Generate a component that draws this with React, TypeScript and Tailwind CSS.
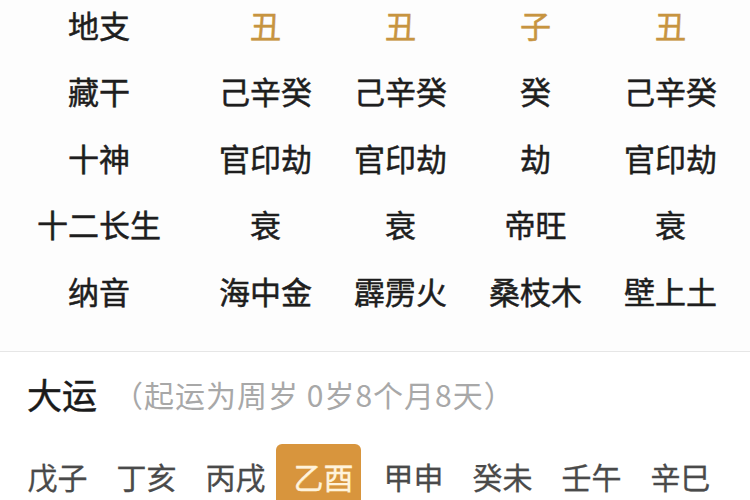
import React from 'react';

const rows: { label: string; cells: string[]; gold?: boolean }[] = [
  { label: '地支', cells: ['丑', '丑', '子', '丑'], gold: true },
  { label: '藏干', cells: ['己辛癸', '己辛癸', '癸', '己辛癸'] },
  { label: '十神', cells: ['官印劫', '官印劫', '劫', '官印劫'] },
  { label: '十二长生', cells: ['衰', '衰', '帝旺', '衰'] },
  { label: '纳音', cells: ['海中金', '霹雳火', '桑枝木', '壁上土'] },
];

const dayun = ['戊子', '丁亥', '丙戌', '乙酉', '甲申', '癸未', '壬午', '辛巳'];

const App: React.FC = () => {
  return (
    <div
      className="w-[750px] h-[500px] overflow-hidden bg-white"
      style={{ fontFamily: '"Noto Sans CJK SC", "Noto Sans", sans-serif' }}
    >
      {/* 四柱表 */}
      <div className="flex flex-col h-[352px] bg-[#fdfdfd] border-b border-[#e6e6e6]">
        <div className="-mt-[9px]">
          {rows.map((row) => (
            <div
              key={row.label}
              className="grid grid-cols-[198px_repeat(4,135px)] h-[66.5px] items-center text-[31px] leading-none [-webkit-text-stroke:0.5px_currentColor]"
            >
              <span className="text-center text-[#1e1e1e]">{row.label}</span>
              {row.cells.map((c, i) => (
                <span
                  key={i}
                  className={`text-center ${row.gold ? 'text-[#c79440]' : 'text-[#1e1e1e]'}`}
                >
                  {c}
                </span>
              ))}
            </div>
          ))}
        </div>
      </div>

      {/* 大运 */}
      <div className="pt-[24px]">
        <div className="flex items-center pl-[27px] leading-none">
          <span className="text-[35px] text-[#1a1a1a] [-webkit-text-stroke:0.5px_currentColor]">大运</span>
          <span className="ml-[16px] text-[30px] tracking-[1px] text-[#a8a8a8]">（起运为周岁 0岁8个月8天）</span>
        </div>
        <div className="flex gap-[4px] pl-[15px] mt-[33px]">
          {dayun.map((d) => (
            <div
              key={d}
              className={`w-[85px] h-[64px] flex items-center justify-center text-[30px] leading-none ${
                d === '乙酉'
                  ? '-ml-[6px] mr-[6px] pl-[10px] rounded-md bg-[#d8953d] text-[#fff3dc] [-webkit-text-stroke:0.4px_currentColor]'
                  : 'text-[#4a4a4a] [-webkit-text-stroke:0.3px_currentColor]'
              }`}
            >
              {d}
            </div>
          ))}
        </div>
      </div>
    </div>
  );
};

export default App;
